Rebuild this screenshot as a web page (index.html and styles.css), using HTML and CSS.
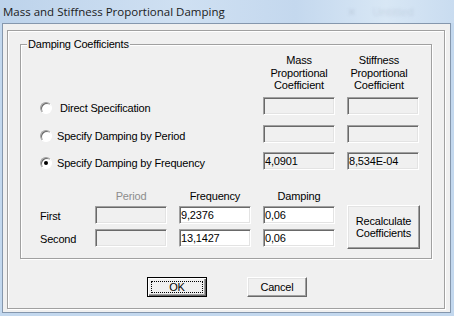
FILE: index.html
```html
<!DOCTYPE html>
<html lang="en">
<head>
  <meta charset="UTF-8">
  <title>Mass and Stiffness Proportional Damping</title>
  <link rel="stylesheet" href="styles.css">
</head>
<body>
  <div class="window">
    <div class="titlebar">
      <span class="title">Mass and Stiffness Proportional Damping</span>
      <span class="ghost">&#x2715; Untitled</span>
    </div>
    <div class="client">
      <div class="frame">
        <div class="group">
          <div class="legend">Damping Coefficients</div>

          <div class="grid upper">
            <div class="head c4">Mass<br>Proportional<br>Coefficient</div>
            <div class="head c5">Stiffness<br>Proportional<br>Coefficient</div>

            <label class="option"><span class="radio"></span>&nbsp;Direct Specification</label>
            <input class="box" readonly>
            <input class="box" readonly>

            <label class="option"><span class="radio"></span>Specify Damping by Period</label>
            <input class="box" readonly>
            <input class="box" readonly>

            <label class="option"><span class="radio on"></span>Specify Damping by Frequency</label>
            <input class="box" readonly value="4,0901">
            <input class="box" readonly value="8,534E-04">
          </div>

          <div class="grid lower">
            <div></div>
            <div class="head dim">Period</div>
            <div class="head">Frequency</div>
            <div class="head">Damping</div>
            <div></div>

            <div class="rowlabel">First</div>
            <input class="box" readonly>
            <input class="box edit" value="9,2376">
            <input class="box edit" value="0,06">
            <button class="btn recalc">Recalculate<br>Coefficients</button>

            <div class="rowlabel">Second</div>
            <input class="box" readonly>
            <input class="box edit" value="13,1427">
            <input class="box edit" value="0,06">
          </div>
        </div>

        <div class="actions">
          <button class="btn default"><span class="focus">OK</span></button>
          <button class="btn plain">Cancel</button>
        </div>
      </div>
    </div>
  </div>
</body>
</html>
```

FILE: styles.css
```css
body {
  margin: 0;
  background: #c3d8ee;
  font-family: "Liberation Sans", Arial, sans-serif;
  font-size: 11px;
  letter-spacing: -0.18px;
  color: #000;
}
.window {
  width: 454px;
  height: 316px;
  overflow: hidden;
}
.titlebar {
  height: 23px;
  display: flex;
  align-items: center;
  padding-left: 3px;
  letter-spacing: 0;
  background: linear-gradient(to right, #bdd3eb, #cfe0f2 40%, #c4d8ee 65%, #d8e7f5 85%, #c9dcf0);
}
.title {
  font-family: "Open Sans", "Noto Sans", sans-serif;
  font-size: 11.5px;
  color: #1b1b1b;
}
.ghost {
  margin-left: 122px;
  font-family: "Open Sans", sans-serif;
  font-size: 11px;
  color: rgba(60, 70, 90, 0.13);
  filter: blur(1.4px);
  word-spacing: 14px;
}
.client {
  margin-left: 2px;
  width: 449px;
  height: 290px;
  box-sizing: border-box;
  border: 1px solid #8597ad;
  background: #f0f0f0;
  padding: 6px 0 0 4px;
}
.frame {
  width: 438px;
  height: 279px;
  box-sizing: border-box;
  border: 1px solid #a0a0a0;
  box-shadow: inset 1px 1px 0 #fff, 1px 1px 0 #fff;
  padding: 13px 0 0 12px;
}
.group {
  width: 412px;
  height: 215px;
  box-sizing: border-box;
  border: 1px solid #a0a0a0;
  box-shadow: inset 1px 1px 0 #fff, 1px 1px 0 #fff;
  padding-left: 1px;
}
.legend {
  width: max-content;
  height: 13px;
  line-height: 13px;
  margin: -7px 0 0 5px;
  padding: 0 1px;
  background: #f0f0f0;
}
.grid {
  display: grid;
  grid-template-columns: 61px 72px 72px 72px 73px;
  column-gap: 12px;
}
.upper {
  margin-top: 3px;
  grid-template-rows: 43px 28px 27px 18px;
}
.lower {
  margin-top: 20px;
  grid-template-rows: 16px 23px 18px;
}
.head {
  text-align: center;
  line-height: 13px;
}
.upper .head {
  line-height: 12.5px;
}
.c4 {
  grid-column: 4;
}
.c5 {
  grid-column: 5;
  padding-right: 9px;
}
.dim {
  color: #8d8d8d;
}
.option {
  grid-column: 1 / 4;
  align-self: start;
  display: flex;
  align-items: center;
  height: 18px;
  margin-top: 2px;
  padding-left: 18px;
}
.radio {
  flex: none;
  width: 12px;
  height: 12px;
  box-sizing: border-box;
  margin-right: 5px;
  border-radius: 50%;
  border: 1px solid;
  border-color: #a0a0a0 #fff #fff #a0a0a0;
  box-shadow: inset 1px 1px 0 #696969;
  background: #fff;
  display: flex;
  align-items: center;
  justify-content: center;
}
.radio.on::after {
  content: "";
  width: 4px;
  height: 4px;
  border-radius: 50%;
  background: #000;
}
.box {
  width: 72px;
  height: 18px;
  box-sizing: border-box;
  margin: 0;
  padding: 0 0 0 1px;
  border: 1px solid;
  border-color: #a0a0a0 #fff #fff #a0a0a0;
  box-shadow: inset 1px 1px 0 #696969, inset -1px -1px 0 #e3e3e3;
  background: #f0f0f0;
  font-family: "Liberation Sans", Arial, sans-serif;
  font-size: 11px;
  letter-spacing: -0.18px;
  color: #000;
  outline: none;
  align-self: start;
}
.box.edit {
  background: #fff;
}
.rowlabel {
  height: 18px;
  line-height: 18px;
  padding: 1px 0 0 18px;
  box-sizing: border-box;
}
.btn {
  margin: 0;
  padding: 0;
  font-family: "Liberation Sans", Arial, sans-serif;
  font-size: 11px;
  letter-spacing: -0.18px;
  color: #000;
  background: #f0f0f0;
  border: 1px solid;
  border-color: #fff #696969 #696969 #fff;
  box-shadow: inset -1px -1px 0 #a0a0a0, inset 1px 1px 0 #e3e3e3;
}
.recalc {
  grid-row: span 2;
  align-self: start;
  width: 73px;
  height: 44px;
  margin-top: -1px;
  line-height: 12.5px;
}
.actions {
  display: flex;
  gap: 40px;
  margin-top: 18px;
  padding-left: 127px;
}
.plain {
  width: 60px;
  height: 20px;
}
.default {
  width: 60px;
  height: 20px;
  display: flex;
  padding: 3px;
  border: 1px solid #000;
  box-shadow: inset 1px 1px 0 #fff, inset -1px -1px 0 #696969, inset -2px -2px 0 #a0a0a0;
}
.focus {
  flex: 1;
  display: flex;
  align-items: center;
  justify-content: center;
  border: 1px dotted #000;
}
```
